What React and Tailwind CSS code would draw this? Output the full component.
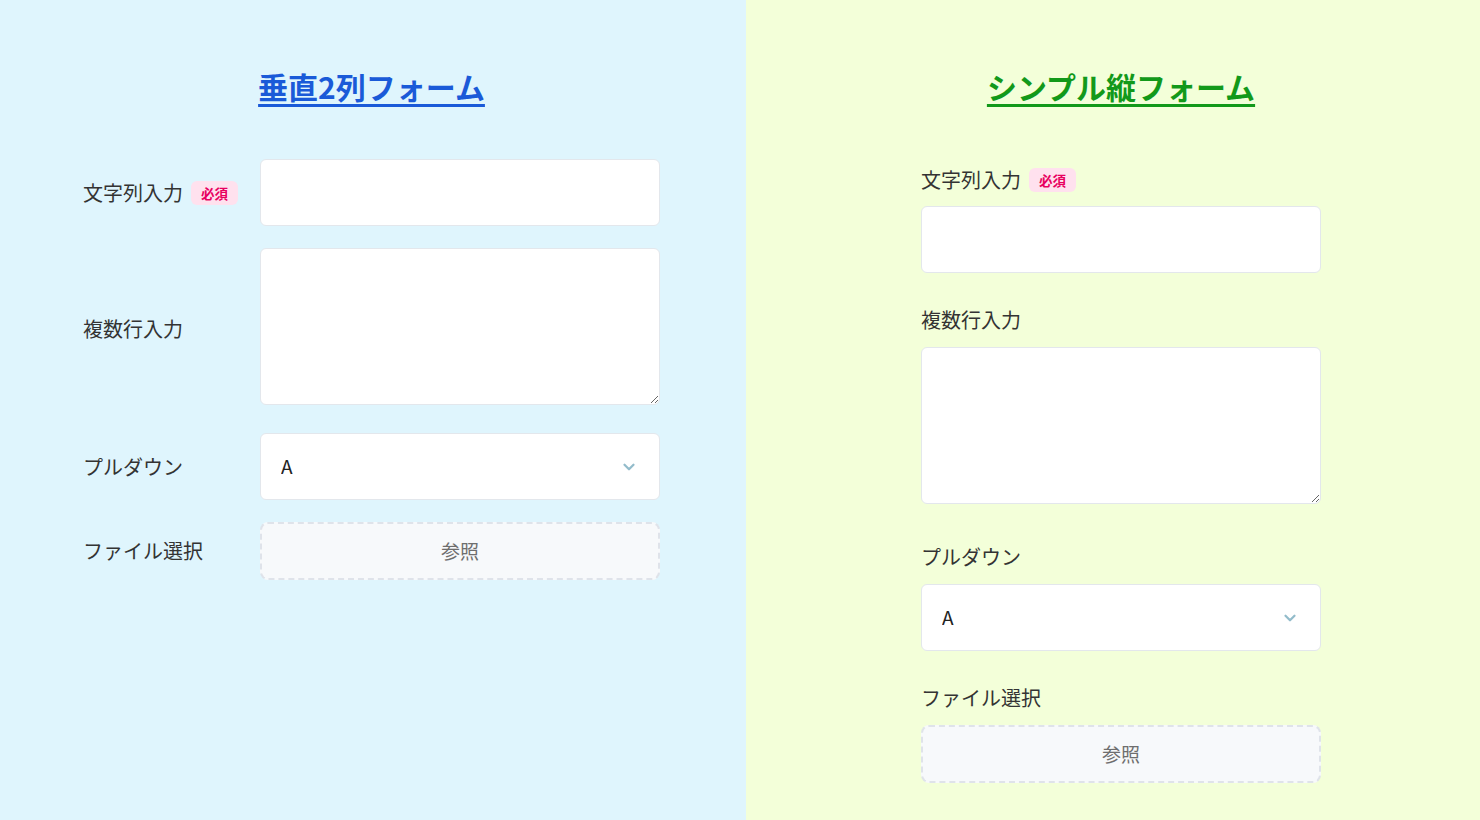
import { ChevronDown } from "lucide-react";

const font = { fontFamily: '"Noto Sans CJK JP", "Noto Sans", sans-serif' };

const Badge = () => (
  <span className="ml-2 inline-flex items-center rounded-md bg-[#ffe1ee] px-[10px] py-[2px] text-[13.5px] font-bold leading-[20px] text-[#e8005f]">
    必須
  </span>
);

const TextInput = () => (
  <input
    type="text"
    className="block h-[67px] w-full rounded-md border border-[#e3e7ec] bg-white px-5 text-[19px] outline-none"
  />
);

// inline textarea keeps the baseline gap under it, as in the original page
const TextArea = () => (
  <textarea className="h-[157px] w-full rounded-md border border-[#e3e7ec] bg-white px-5 py-3 text-[19px] outline-none" />
);

const Select = () => (
  <div className="relative">
    <select className="block h-[67px] w-full appearance-none rounded-md border border-[#e3e7ec] bg-white pl-5 text-[19px] text-[#222] outline-none">
      <option>A</option>
      <option>B</option>
      <option>C</option>
    </select>
    <ChevronDown
      size={18}
      strokeWidth={3}
      className="pointer-events-none absolute right-[22px] top-1/2 -translate-y-1/2 text-[#93bccb]"
    />
  </div>
);

const FileButton = () => (
  <button className="flex h-[58px] w-full items-center justify-center rounded-lg border-2 border-dashed border-[#dfe3ea] bg-[#f7f9fb] text-[19px] text-[#6e6e6e]">
    参照
  </button>
);

const App = () => {
  return (
    <div className="flex h-[820px] w-full text-[#333]" style={font}>
      {/* 垂直2列フォーム */}
      <div className="w-[746px] bg-[#dff5fd]">
        <div className="ml-[83px] w-[577px] pt-[64px]">
          <h2 className="text-center text-[30px] font-bold leading-[45px] text-[#1a5ad8] underline decoration-[2.5px] underline-offset-[5px]">
            垂直2列フォーム
          </h2>
          <form className="mt-[50px] flex flex-col gap-[22px]">
            <div className="flex items-center">
              <label className="flex w-[177px] items-center text-[20px]">
                文字列入力
                <Badge />
              </label>
              <div className="flex-1">
                <TextInput />
              </div>
            </div>
            <div className="flex items-center">
              <label className="w-[177px] text-[20px]">複数行入力</label>
              <div className="flex-1">
                <TextArea />
              </div>
            </div>
            <div className="mt-px flex items-center">
              <label className="w-[177px] text-[20px]">プルダウン</label>
              <div className="flex-1">
                <Select />
              </div>
            </div>
            <div className="flex items-center">
              <label className="w-[177px] text-[20px]">ファイル選択</label>
              <div className="flex-1">
                <FileButton />
              </div>
            </div>
          </form>
        </div>
      </div>

      {/* シンプル縦フォーム */}
      <div className="flex-1 bg-[#f3ffd9]">
        <div className="ml-[175px] w-[400px] pt-[64px]">
          <h2 className="text-center text-[30px] font-bold leading-[45px] text-[#12991a] underline decoration-[2.5px] underline-offset-[5px]">
            シンプル縦フォーム
          </h2>
          <form className="mt-[57px] flex flex-col gap-[33px]">
            <div>
              <label className="mb-[12px] flex items-center text-[20px] leading-[28px]">
                文字列入力
                <Badge />
              </label>
              <TextInput />
            </div>
            <div>
              <label className="mb-[13px] block text-[20px] leading-[28px]">複数行入力</label>
              <TextArea />
            </div>
            <div className="mt-px">
              <label className="mb-[13px] block text-[20px] leading-[28px]">プルダウン</label>
              <Select />
            </div>
            <div>
              <label className="mb-[13px] block text-[20px] leading-[28px]">ファイル選択</label>
              <FileButton />
            </div>
          </form>
        </div>
      </div>
    </div>
  );
};

export default App;
